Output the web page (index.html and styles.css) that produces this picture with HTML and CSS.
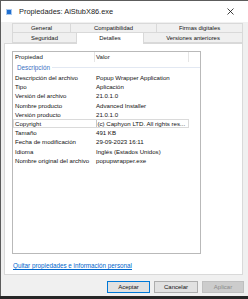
FILE: index.html
```html
<!DOCTYPE html>
<html lang="es">
<head>
  <meta charset="UTF-8" />
  <title>Propiedades: AiStubX86.exe</title>
  <link rel="stylesheet" href="styles.css">
</head>
<body>
  <div class="window">
    <div class="titlebar">
      <span class="app-icon"></span>
      <span class="title">Propiedades: AiStubX86.exe</span>
      <svg class="close" width="7" height="7" viewBox="0 0 7 7">
        <path d="M0.5 0.5 L6.5 6.5 M6.5 0.5 L0.5 6.5" stroke="#111" stroke-width="0.8" fill="none"/>
      </svg>
    </div>

    <div class="tabs">
      <div class="tab-row">
        <div class="tab t-general">General</div>
        <div class="tab t-compat">Compatibilidad</div>
        <div class="tab t-firmas">Firmas digitales</div>
      </div>
      <div class="tab-row">
        <div class="tab t-seg">Seguridad</div>
        <div class="tab t-det active">Detalles</div>
        <div class="tab t-vers">Versiones anteriores</div>
      </div>
    </div>

    <div class="page">
      <div class="listview">
        <div class="lv-header">
          <div class="col-prop">Propiedad</div>
          <div class="col-val">Valor</div>
          <div class="col-rest"></div>
        </div>
        <div class="group">
          <span>Descripción</span>
          <span class="group-line"></span>
        </div>
        <div class="row"><div class="col-prop">Descripción del archivo</div><div class="col-val">Popup Wrapper Application</div></div>
        <div class="row"><div class="col-prop">Tipo</div><div class="col-val">Aplicación</div></div>
        <div class="row"><div class="col-prop">Versión del archivo</div><div class="col-val">21.0.1.0</div></div>
        <div class="row"><div class="col-prop">Nombre producto</div><div class="col-val">Advanced Installer</div></div>
        <div class="row"><div class="col-prop">Versión producto</div><div class="col-val">21.0.1.0</div></div>
        <div class="row focused"><div class="col-prop">Copyright</div><div class="col-val boxed">(c) Caphyon LTD. All rights res...</div></div>
        <div class="row"><div class="col-prop">Tamaño</div><div class="col-val">491 KB</div></div>
        <div class="row"><div class="col-prop">Fecha de modificación</div><div class="col-val">29-09-2023 16:11</div></div>
        <div class="row"><div class="col-prop">Idioma</div><div class="col-val">Inglés (Estados Unidos)</div></div>
        <div class="row"><div class="col-prop">Nombre original del archivo</div><div class="col-val">popupwrapper.exe</div></div>
      </div>
      <a class="link" href="#">Quitar propiedades e información personal</a>
    </div>

    <div class="buttons">
      <button class="btn default">Aceptar</button>
      <button class="btn">Cancelar</button>
      <button class="btn disabled">Aplicar</button>
    </div>
  </div>
</body>
</html>
```

FILE: styles.css
```css
body {
  margin: 0;
  background: #262626;
  font-family: "Liberation Sans", Arial, sans-serif;
  color: #000;
}
.window {
  width: 247px;
  height: 295px;
  border-top: 1px solid #5c5c5c;
  border-left: 1px solid #5c5c5c;
  background: #f0f0f0;
  overflow: hidden;
}
.titlebar {
  height: 21px;
  background: #fff;
  display: flex;
  align-items: center;
  padding-left: 5px;
}
.app-icon {
  width: 4px;
  height: 4px;
  background: #1f6fd0;
  border: 1px solid #a9c9ef;
  margin-right: 7px;
}
.title {
  font-size: 7.4px;
  color: #1a1a1a;
  flex: 1;
}
.close {
  margin-right: 14px;
}
.tabs {
  margin: 1px 0 0 11px;
  width: 231px;
}
.tab-row {
  display: flex;
  height: 10px;
}
.tab {
  box-sizing: border-box;
  border: 1px solid #d9d9d9;
  border-right: none;
  font-size: 5.9px;
  text-align: center;
  line-height: 8px;
  color: #111;
}
.tab-row .tab:last-child {
  border-right: 1px solid #d9d9d9;
}
.tab-row + .tab-row .tab {
  border-top: none;
  height: 10px;
  line-height: 10px;
}
.t-general { width: 58px; }
.t-compat { width: 86px; }
.t-firmas { width: 87px; }
.t-seg { width: 64px; }
.t-det { width: 67px; }
.t-vers { width: 100px; }
.tab.active {
  background: #fff;
  position: relative;
  top: -1px;
  height: 12px !important;
  border-top: 1px solid #d9d9d9 !important;
  border-bottom: none;
  z-index: 1;
}
.page {
  margin-left: 3px;
  background: #fff;
  border: 1px solid #d9d9d9;
  padding: 7px 0 0 7px;
  box-sizing: border-box;
  width: 239px;
  height: 232px;
}
.listview {
  box-sizing: border-box;
  width: 189px;
  height: 203px;
  border: 1px solid #b9b9b9;
  font-size: 6.1px;
}
.lv-header {
  display: flex;
  height: 10px;
  line-height: 10px;
  color: #222;
}
.lv-header .col-prop,
.lv-header .col-val {
  border-right: 1px solid #e5e5e5;
}
.col-prop {
  box-sizing: border-box;
  width: 82px;
  padding-left: 2px;
  white-space: nowrap;
  overflow: hidden;
}
.col-val {
  box-sizing: border-box;
  width: 94px;
  padding-left: 1px;
  white-space: nowrap;
  overflow: hidden;
}
.col-rest {
  flex: 1;
}
.group {
  display: flex;
  align-items: center;
  height: 11px;
  padding-left: 4px;
  color: #3c6fc2;
  font-size: 6.3px;
}
.group-line {
  flex: 1;
  height: 1px;
  background: #e2e8f2;
  margin-left: 2px;
}
.row {
  display: flex;
  height: 9.2px;
  line-height: 9.2px;
  color: #111;
}
.row.focused {
  box-sizing: border-box;
  width: 176px;
  border: 1px solid #dadada;
  line-height: 7.2px;
}
.row.focused .col-prop {
  padding-left: 1px;
}
.col-val.boxed {
  border-left: 1px solid #c6c6c6;
  width: 93px;
}
.link {
  display: inline-block;
  margin-top: 5px;
  margin-left: 1px;
  font-size: 6.3px;
  color: #0066cc;
}
.buttons {
  display: flex;
  justify-content: flex-end;
  gap: 4px;
  margin-top: 6px;
  width: 243px;
}
.btn {
  box-sizing: border-box;
  height: 12px;
  padding: 0;
  border: 1px solid #adadad;
  background: #e1e1e1;
  font-family: "Liberation Sans", Arial, sans-serif;
  font-size: 6px;
  color: #111;
  width: 44px;
}
.btn.default {
  border-color: #0078d7;
  width: 43px;
}
.btn.disabled {
  background: #cccccc;
  border-color: #bfbfbf;
  color: #8a8a8a;
  width: 42px;
}
```
